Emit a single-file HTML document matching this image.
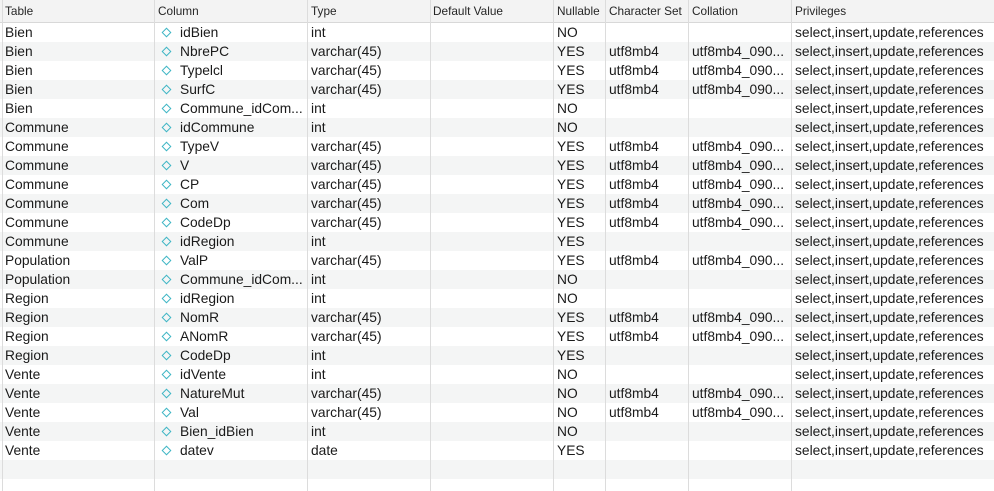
<!DOCTYPE html>
<html style="width:994px;height:491px;overflow:hidden"><head><style>
body{margin:0;width:994px;height:491px;overflow:hidden;background:#fff;font-family:"Liberation Sans",Helvetica,sans-serif;position:relative}
.h{position:absolute;top:0;left:0;width:994px;height:22px;background:#f3f3f3;border-bottom:1px solid #d8d8d8}
.h span{position:absolute;top:4px;font-size:11.8px;color:#262626}
.r{position:absolute;left:0;width:994px;height:19px;font-size:13.8px;color:#1a1a1a}
.r span{position:absolute;top:2px;white-space:nowrap}
.g{background:#f4f5f5}
.v{position:absolute;top:0;width:1px;height:491px;background:#dcdcdc}
.d{position:absolute;top:6px;left:163px;width:5px;height:5px;border:1px solid #3fb6c5;transform:rotate(45deg)}
</style></head><body>
<div class="h"><span style="left:5px">Table</span><span style="left:158px">Column</span><span style="left:311px">Type</span><span style="left:433px">Default Value</span><span style="left:557px">Nullable</span><span style="left:609px">Character Set</span><span style="left:692px">Collation</span><span style="left:795px">Privileges</span></div>
<div id="rows"></div>
<div class="v" style="left:2px"></div><div class="v" style="left:154px"></div><div class="v" style="left:307px"></div><div class="v" style="left:430px"></div><div class="v" style="left:553px"></div><div class="v" style="left:605px"></div><div class="v" style="left:688px"></div><div class="v" style="left:791px"></div>
<script>
var d=[["Bien","idBien","int","NO",0],["Bien","NbrePC","varchar(45)","YES",1],["Bien","Typelcl","varchar(45)","YES",1],["Bien","SurfC","varchar(45)","YES",1],["Bien","Commune_idCom...","int","NO",0],["Commune","idCommune","int","NO",0],["Commune","TypeV","varchar(45)","YES",1],["Commune","V","varchar(45)","YES",1],["Commune","CP","varchar(45)","YES",1],["Commune","Com","varchar(45)","YES",1],["Commune","CodeDp","varchar(45)","YES",1],["Commune","idRegion","int","YES",0],["Population","ValP","varchar(45)","YES",1],["Population","Commune_idCom...","int","NO",0],["Region","idRegion","int","NO",0],["Region","NomR","varchar(45)","YES",1],["Region","ANomR","varchar(45)","YES",1],["Region","CodeDp","int","YES",0],["Vente","idVente","int","NO",0],["Vente","NatureMut","varchar(45)","NO",1],["Vente","Val","varchar(45)","NO",1],["Vente","Bien_idBien","int","NO",0],["Vente","datev","date","YES",0]];
var h="";
for(var i=0;i<25;i++){var y=23+i*19;var c=i%2?"r g":"r";h+='<div class="'+c+'" style="top:'+y+'px;height:'+Math.min(19,491-y)+'px;overflow:hidden">';
if(i<d.length){var r=d[i];h+='<span style="left:5px">'+r[0]+'</span><i class="d"></i><span style="left:180px">'+r[1]+'</span><span style="left:311px">'+r[2]+'</span><span style="left:557px">'+r[3]+'</span>';
if(r[4])h+='<span style="left:609px">utf8mb4</span><span style="left:692px">utf8mb4_090...</span>';
h+='<span style="left:795px">select,insert,update,references</span>';}
h+='</div>';}
document.getElementById("rows").innerHTML=h;
</script>
</body></html>
